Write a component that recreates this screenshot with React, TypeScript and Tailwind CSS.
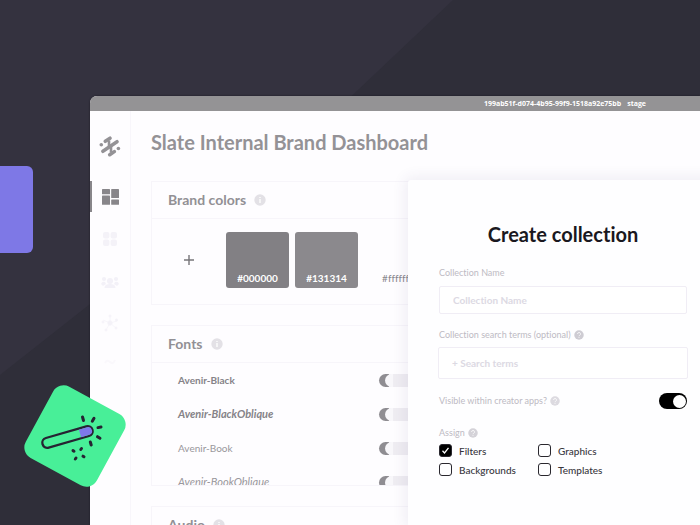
import React from "react";

function InfoDot({ glyph = "i", className = "" }: { glyph?: string; className?: string }) {
  return (
    <svg viewBox="0 0 12 12" className={"shrink-0 " + className} aria-hidden="true">
      <circle cx="6" cy="6" r="5.7" fill="currentColor" />
      {glyph === "i" ? (
        <path d="M6 3v.9M6 5v4" stroke="#fff" strokeWidth="1.3" />
      ) : (
        <path d="M4.3 4.7a1.75 1.75 0 1 1 2.5 1.6q-.8.4-.8 1.1M6 8.4v1" stroke="#fff" strokeWidth="1" fill="none" />
      )}
    </svg>
  );
}

function SlateLogo() {
  return (
    <svg viewBox="0 0 22 22" className="size-[22px] text-[#949296]" fill="none" stroke="currentColor" strokeLinecap="round" aria-hidden="true">
      <path d="M6.300 6.300 11 3.200M3.900 16.300 18 6.700M10.700 19.700 15.300 16.600" strokeWidth="3.500" />
      <path d="M10 5.500v6M12 11.500v6" strokeWidth="2.600" strokeLinecap="butt" />
      <circle cx="2.300" cy="9.700" r="1.800" fill="currentColor" stroke="none" />
      <circle cx="19.400" cy="13.500" r="1.800" fill="currentColor" stroke="none" />
    </svg>
  );
}

function Sidebar() {
  return (
    <nav aria-label="Main" className="flex w-[41px] shrink-0 flex-col items-center border-r border-[#f8f6fb] pt-6">
      <SlateLogo />
      <button aria-label="Dashboard" className="mt-6 flex h-[31px] w-full items-center justify-center border-l-2 border-[#88868a] pr-px">
        <svg viewBox="0 0 17 16" className="h-4 w-[17px] fill-[#88868a]">
          <rect x="0" y="0" width="8" height="5.3" rx=".6" />
          <rect x="9.2" y="0" width="7.8" height="9" rx=".6" />
          <rect x="0" y="6.6" width="8" height="9.2" rx=".6" />
          <rect x="9.2" y="10.4" width="7.8" height="5.4" rx=".6" />
        </svg>
      </button>
      <button aria-label="Collections" className="mt-5 flex h-[14px] items-center">
        <svg viewBox="0 0 14 14" className="size-[14px] fill-[#f4f2f8]">
          <rect width="6.4" height="6.4" rx="2" />
          <rect x="7.6" width="6.4" height="6.4" rx="2" />
          <rect y="7.6" width="6.4" height="6.4" rx="2" />
          <rect x="7.6" y="7.6" width="6.4" height="6.4" rx="2" />
        </svg>
      </button>
      <button aria-label="Members" className="mt-7 flex h-4 items-center">
        <svg viewBox="0 0 18 14" className="h-[14px] w-[18px] fill-[#f3f1f8]">
          <circle cx="9" cy="6" r="3" />
          <circle cx="3" cy="4" r="2.1" />
          <circle cx="15" cy="4" r="2.1" />
          <path d="M3.5 13q0-4 5.500-4t5.500 4zM0 9q1-3 4-2l1 2-3 2zM18 9q-1-3-4-2l-1 2 3 2z" />
        </svg>
      </button>
      <button aria-label="Connections" className="mt-6 flex h-[18px] items-center">
        <svg viewBox="0 0 18 18" className="size-[18px] fill-[#f4f2f8] stroke-[#f6f4fa]">
          <path d="M9 9V2M9 9 2 6M9 9l7-2M9 9l-4 7M9 9l6 5" strokeWidth=".8" />
          <circle cx="9" cy="9" r="2.2" />
          <circle cx="9" cy="2" r="1" />
          <circle cx="2" cy="8" r="1" />
          <circle cx="15.500" cy="6" r="1" />
          <circle cx="5" cy="16" r="1" />
          <circle cx="15" cy="14" r="1" />
        </svg>
      </button>
      <button aria-label="Settings" className="mt-[26px]">
        <svg viewBox="0 0 12 8" className="h-2 w-3" fill="none" stroke="#faf8fc">
          <path d="M1 5q2-4 5-1t5-2" strokeWidth="2" />
        </svg>
      </button>
    </nav>
  );
}

function Card({ title, children }: { title: string; children?: React.ReactNode }) {
  return (
    <section className="border border-[#f7f5fa]">
      <header className="flex h-[37px] items-center gap-2 border-b border-[#f7f5fa] pl-4">
        <h2 className="text-[14px] leading-5 font-bold text-[#929095]">{title}</h2>
        <InfoDot className="size-3 text-[#e3e1e6]" />
      </header>
      {children}
    </section>
  );
}

const swatchBase = "flex h-14 w-[63px] shrink-0 items-end justify-center rounded-[3px] pb-1 text-[10px] leading-3";

const fonts = [
  { name: "Avenir-Black", style: "text-[10px] font-bold text-[#858388]" },
  { name: "Avenir-BlackOblique", style: "text-[11px] font-bold italic text-[#858388]" },
  { name: "Avenir-Book", style: "text-[10px] text-[#99979c]" },
  { name: "Avenir-BookOblique", style: "text-[11px] italic text-[#99979c]" },
];

function Dashboard() {
  return (
    <main className="min-w-0 flex-1 pt-[19px] pl-5">
      <h1 className="text-[20px] leading-6 font-bold text-[#949296]">Slate Internal Brand Dashboard</h1>
      <div className="mt-[27px] flex flex-col gap-5">
        <Card title="Brand colors">
          <div className="flex gap-[6px] pt-[13px] pb-4 pl-[5px]">
            <button aria-label="Add color" className="flex h-14 w-[63px] shrink-0 items-center justify-center">
              <svg viewBox="0 0 10 10" className="size-[10px]" stroke="#77757a" strokeWidth="1.400">
                <path d="M5 0v10M0 5h10" />
              </svg>
            </button>
            <div className={swatchBase + " bg-[#828084] font-bold text-white"}>#000000</div>
            <div className={swatchBase + " bg-[#8b898d] font-bold text-white"}>#131314</div>
            <div className={swatchBase + " text-[#89878d]"}>#ffffff</div>
          </div>
        </Card>
        <Card title="Fonts">
          <ul className="h-[122px] overflow-hidden">
            {fonts.map((f) => (
              <li key={f.name}>
                <label className="flex h-[34px] items-center pl-[26px]">
                  <span className={"w-[201px] shrink-0 leading-4 " + f.style}>{f.name}</span>
                  <input
                    type="checkbox"
                    role="switch"
                    defaultChecked
                    className="h-[13px] w-10 appearance-none rounded-full bg-linear-to-r from-[#8f8d92] from-25% to-[#efedf2] to-25% before:ml-[6px] before:block before:h-[13px] before:w-[8px] before:rounded-l-full before:bg-[#f8f7fa]"
                  />
                </label>
              </li>
            ))}
          </ul>
        </Card>
        <Card title="Audio" />
      </div>
    </main>
  );
}

const labelText = "text-[9px] leading-3 text-[#bdbac3]";
const fieldBase = "block rounded-[2px] border border-[#f0edf5] bg-white text-[10px] font-bold text-[#55535a] outline-none placeholder:font-bold placeholder:text-[#dcd9e3]";

function Option({ label, checked = false }: { label: string; checked?: boolean }) {
  return (
    <label className="flex h-[19px] items-center gap-[7px] text-[10px] leading-3 font-medium text-[#38363d]">
      <span className="grid size-[13px] shrink-0">
        <input
          type="checkbox"
          defaultChecked={checked}
          className="peer col-start-1 row-start-1 size-[13px] appearance-none rounded-[3px] border border-[#29272e] checked:bg-black"
        />
        <svg viewBox="0 0 13 13" className="pointer-events-none col-start-1 row-start-1 hidden size-[13px] peer-checked:block" fill="none" stroke="#fff" strokeWidth="1.300">
          <path d="M3.500 6.800 5.500 8.900 9.500 3.900" />
        </svg>
      </span>
      {label}
    </label>
  );
}

function CreateCollection() {
  return (
    <form
      aria-labelledby="create-title"
      className="absolute top-[69px] -right-[18px] bottom-0 left-[318px] rounded-tl-[3px] bg-[#fefeff] px-[31px] pt-[42px] shadow-[0_0_14px_3px_rgba(70,50,110,0.08)]"
    >
      <h2 id="create-title" className="text-center text-[20px] leading-6 font-bold text-[#1a1820]">
        Create collection
      </h2>
      <label htmlFor="collection-name" className={"mt-[21px] block " + labelText}>Collection Name</label>
      <input id="collection-name" placeholder="Collection Name" className={fieldBase + " mt-[7px] h-7 w-full px-[13px]"} />
      <div className="mt-[15px] flex items-center gap-[3px]">
        <label htmlFor="search-terms" className={labelText}>Collection search terms (optional)</label>
        <InfoDot glyph="?" className="size-[10px] text-[#ceccd3]" />
      </div>
      <div className="-mx-px mt-[6px]">
        <input id="search-terms" placeholder="+ Search terms" className={fieldBase + " h-8 w-full px-[13px]"} />
      </div>
      <div className="mt-[14px] flex h-4 items-center gap-[3px]">
        <label htmlFor="visible" className={labelText}>Visible within creator apps?</label>
        <InfoDot glyph="?" className="size-[10px] text-[#dcdae0]" />
        <input
          id="visible"
          type="checkbox"
          role="switch"
          defaultChecked
          className="ml-auto flex h-4 w-7 appearance-none items-center rounded-full bg-black px-px before:size-[13px] before:rounded-full before:bg-white checked:justify-end"
        />
      </div>
      <fieldset className="mt-[18px]">
        <legend className={"flex items-center gap-[3px] " + labelText}>
          Assign <InfoDot glyph="?" className="size-[10px] text-[#d4d2d8]" />
        </legend>
        <div className="mt-[2px] grid grid-cols-[99px_1fr]">
          <Option label="Filters" checked />
          <Option label="Graphics" />
          <Option label="Backgrounds" />
          <Option label="Templates" />
        </div>
      </fieldset>
    </form>
  );
}

function MagicWandBadge() {
  return (
    <svg viewBox="0 0 104 104" className="absolute top-[384px] left-[23px] size-[104px]" role="img" aria-label="Magic wand">
      <rect x="11.500" y="11.500" width="81" height="81" rx="12" fill="#48ef98" transform="rotate(28.500 52 52)" />
      <g transform="rotate(-16 44.500 53)">
        <rect x="18.500" y="48" width="52" height="10" rx="5" fill="none" stroke="#262332" strokeWidth="2.300" />
        <path d="M57.500 49.100h8.500a3.900 3.900 0 0 1 0 7.800h-8.500z" fill="#7e78ea" />
      </g>
      <path
        d="M59.500 33l1 3.500M71 34.300l-1.700 2.900M78 43l-3 .6M77 54.300l-2.500-1.600M68.200 61l-.9-3M50 66.600l1 .6M58.500 64.500l-.7 1M53 74l-.7 1M60 72.200l1 .6"
        stroke="#262332"
        strokeWidth="3"
        strokeLinecap="round"
      />
    </svg>
  );
}

export default function App() {
  return (
    <div className="relative flex h-screen min-h-[525px] w-full flex-col overflow-hidden bg-[#34323f] pt-24 pl-[90px] font-['Lato','Open_Sans',sans-serif] [font-variant-ligatures:none]">
      <svg className="absolute inset-0 h-full w-full" viewBox="0 0 700 525" preserveAspectRatio="none" aria-hidden="true">
        <path d="M453 0 340 107 0 375V525H700V0z" fill="#2f2e39" />
      </svg>
      <div className="absolute top-[166px] left-0 h-[87px] w-[33px] rounded-r-[6px] bg-[#7e78e6]" />
      <div className="relative flex min-h-0 flex-1 flex-col rounded-tl-[7px] bg-[#fefdff] shadow-[0_0_2px_#19171f]">
        <header className="flex h-[15px] shrink-0 items-center justify-end gap-[6px] rounded-tl-[7px] bg-[#949395] pr-[54px] font-['Open_Sans',sans-serif] text-[7px] leading-[9px] font-bold text-white">
          <span>199ab51f-d074-4b95-99f9-1518a92e75bb</span>
          <span>stage</span>
        </header>
        <div className="relative flex min-h-0 flex-1 overflow-hidden">
          <Sidebar />
          <Dashboard />
          <CreateCollection />
        </div>
      </div>
      <MagicWandBadge />
    </div>
  );
}
